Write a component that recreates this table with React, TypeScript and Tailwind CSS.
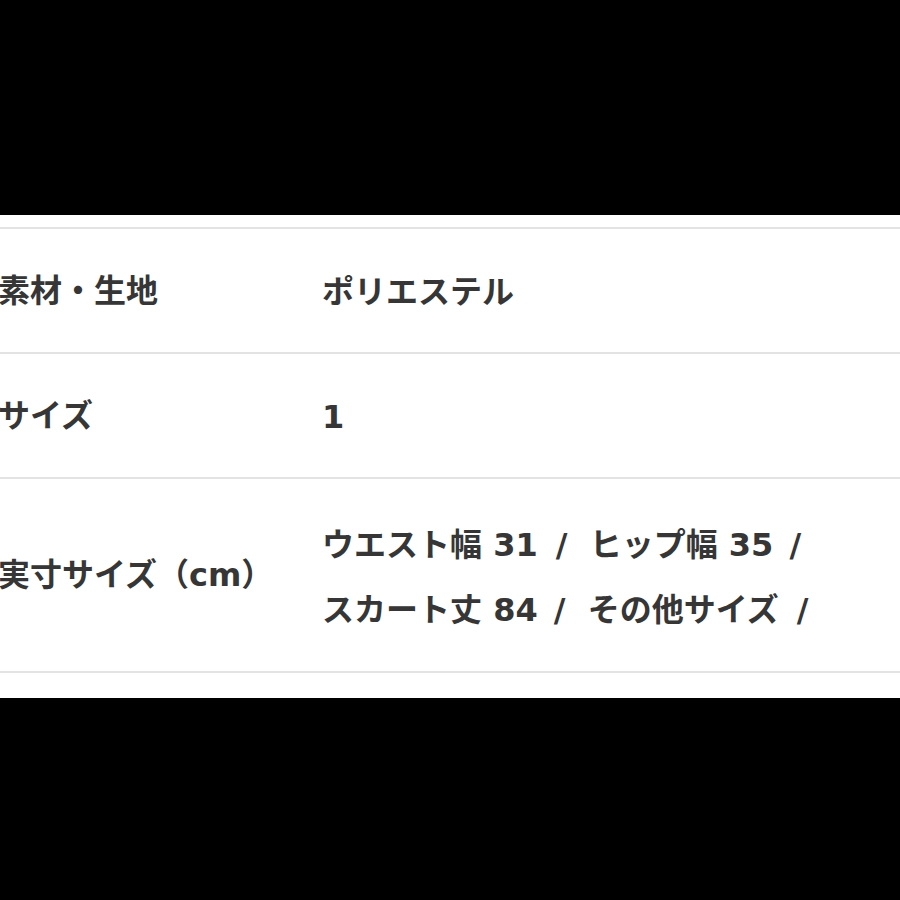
type Seg = { t: string; cls?: string };

const rows: { label: string; lines: Seg[][] }[] = [
  { label: "素材・生地", lines: [[{ t: "ポリエステル" }]] },
  { label: "サイズ", lines: [[{ t: "1" }]] },
  {
    label: "実寸サイズ（cm）",
    lines: [
      [
        { t: "ウエスト幅 31" },
        { t: " /", cls: "ml-[7px]" },
        { t: " ヒップ幅 35", cls: "ml-[11px]" },
        { t: " /", cls: "ml-[5px]" },
      ],
      [
        { t: "スカート丈 84" },
        { t: " /", cls: "ml-[5px]" },
        { t: " その他サイズ", cls: "ml-[11px]" },
        { t: " /", cls: "ml-[7px]" },
      ],
    ],
  },
];

export default function App() {
  return (
    <div
      className="w-[900px] h-[900px] bg-black overflow-hidden flex flex-col"
      style={{ fontFamily: '"DejaVu Sans", "Noto Sans CJK JP", sans-serif' }}
    >
      <div className="h-[215px] shrink-0" />
      <div className="bg-white h-[483px] pt-[12px] pb-[24px] text-[#363636] font-bold">
        <div className="border-t-2 border-[#e3e3e3]">
          {rows.map((row, i) => (
            <div
              key={i}
              className={
                "grid grid-cols-[322px_1fr] items-center border-b-2 border-[#e3e3e3] " +
                (i === 2 ? "h-[194px]" : "h-[125px]")
              }
            >
              <div className="-ml-[2px] text-[32px] leading-none whitespace-nowrap">{row.label}</div>
              <div className={"text-[32px] leading-[65px] whitespace-pre " + (i === 2 ? "pt-[6px]" : "pt-[3px]")}>
                {row.lines.map((line, j) => (
                  <div key={j}>
                    {line.map((s, k) => (
                      <span key={k} className={s.cls}>
                        {s.t}
                      </span>
                    ))}
                  </div>
                ))}
              </div>
            </div>
          ))}
        </div>
      </div>
    </div>
  );
}
